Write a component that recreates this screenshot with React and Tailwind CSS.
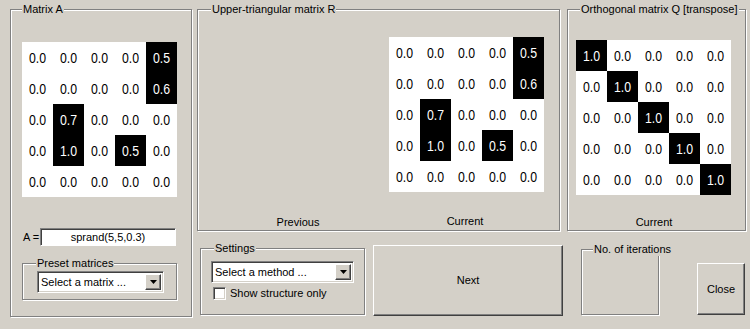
const A = [
  [0, 0, 0, 0, 0.5],
  [0, 0, 0, 0, 0.6],
  [0, 0.7, 0, 0, 0],
  [0, 1.0, 0, 0.5, 0],
  [0, 0, 0, 0, 0],
];

const Q = [0, 1, 2, 3, 4].map((r) => [0, 1, 2, 3, 4].map((c) => (r === c ? 1 : 0)));

function Matrix({ data }) {
  return (
    <div className="grid grid-cols-[repeat(5,31px)] grid-rows-[repeat(5,31px)] bg-white w-[155px] h-[155px] font-['Liberation_Sans',Arial,sans-serif] text-[15px]">
      {data.flat().map((v, i) => (
        <div
          key={i}
          className={`flex items-center justify-center leading-none ${v !== 0 ? 'bg-black text-white' : 'text-black'}`}
        >
          <span className="inline-block scale-x-[0.82]">{v.toFixed(1)}</span>
        </div>
      ))}
    </div>
  );
}

// etched group frame, legend sits over the top line
function Group({ title, className = '', legendLeft = 'left-[11px]', children }) {
  return (
    <div className={`relative border border-[#808080] shadow-[1px_1px_0_#fff,inset_1px_1px_0_#fff] ${className}`}>
      <span className={`absolute -top-[7px] ${legendLeft} px-[1px] bg-[#d4d0c8] leading-[13px] whitespace-nowrap`}>
        {title}
      </span>
      {children}
    </div>
  );
}

function Select({ label, className = '' }) {
  return (
    <div className={`flex items-center bg-white border border-t-[#808080] border-l-[#808080] border-b-white border-r-white shadow-[inset_1px_1px_0_#404040,inset_-1px_-1px_0_#d4d0c8] p-[2px] ${className}`}>
      <span className="flex-1 pl-[1px] leading-[13px] whitespace-nowrap">{label}</span>
      <div className="w-[16px] h-full bg-[#d4d0c8] border border-t-white border-l-white border-r-[#404040] border-b-[#404040] shadow-[inset_-1px_-1px_0_#808080] flex items-center justify-center">
        <svg width="7" height="4" viewBox="0 0 7 4">
          <path d="M0 0h7L3.5 4z" fill="#000" />
        </svg>
      </div>
    </div>
  );
}

function Button({ label, className = '' }) {
  return (
    <div className={`flex items-center justify-center bg-[#d4d0c8] border border-t-white border-l-white border-r-[#404040] border-b-[#404040] shadow-[inset_-1px_-1px_0_#808080] ${className}`}>
      {label}
    </div>
  );
}

export default function App() {
  return (
    <div className="w-[750px] h-[329px] overflow-hidden bg-[#d4d0c8] flex gap-[5px] pl-[10px] pt-[9px] font-['Liberation_Sans',Arial,sans-serif] text-[11px] text-black">
      {/* Matrix A */}
      <Group title="Matrix A" legendLeft="left-[11px]" className="w-[182px] h-[308px] flex flex-col pl-[11px] pt-[32px]">
        <Matrix data={A} />
        <div className="flex items-center mt-[31px] ml-[1px]">
          <span className="w-[17px] leading-[13px] whitespace-nowrap">A =</span>
          <div className="w-[136px] h-[18px] bg-white border border-t-[#808080] border-l-[#808080] border-b-white border-r-white shadow-[inset_1px_1px_0_#404040] flex items-center justify-center">
            sprand(5,5,0.3)
          </div>
        </div>
        <Group title="Preset matrices" legendLeft="left-[13px]" className="w-[155px] h-[37px] mt-[17px] pt-[7px] pl-[14px]">
          <Select label="Select a matrix ..." className="w-[127px] h-[22px]" />
        </Group>
      </Group>

      <div className="flex flex-col">
        <div className="flex gap-[7px]">
          {/* Upper-triangular matrix R */}
          <Group title="Upper-triangular matrix R" legendLeft="left-[13px]" className="w-[363px] h-[222px] flex flex-col">
            <div className="flex justify-end pr-[15px] pt-[27px]">
              <Matrix data={A} />
            </div>
            <div className="flex mt-[24px] leading-[13px]">
              <span className="w-[200px] text-center">Previous</span>
              <span className="w-[134px] text-center -mt-[1px]">Current</span>
            </div>
          </Group>

          {/* Orthogonal matrix Q */}
          <Group title="Orthogonal matrix Q [transpose]" legendLeft="left-[12px]" className="w-[179px] h-[222px] flex flex-col pl-[8px] pt-[30px]">
            <Matrix data={Q} />
            <span className="w-[155px] text-center mt-[21px] leading-[13px] pl-[1px]">Current</span>
          </Group>
        </div>

        <div className="flex items-start mt-[14px]">
          <Group title="Settings" legendLeft="left-[13px]" className="w-[165px] h-[67px] mt-[3px] ml-[3px] flex flex-col pl-[10px] pt-[12px]">
            <Select label="Select a method ..." className="w-[143px] h-[22px]" />
            <label className="flex items-center mt-[4px] ml-[2px] gap-[4px]">
              <span className="w-[13px] h-[13px] bg-white border border-t-[#808080] border-l-[#808080] border-b-white border-r-white shadow-[inset_1px_1px_0_#404040,inset_-1px_-1px_0_#d4d0c8]" />
              <span className="leading-[13px] whitespace-nowrap">Show structure only</span>
            </label>
          </Group>

          <Button label="Next" className="w-[190px] h-[71px] ml-[8px]" />

          <Group title="No. of iterations" legendLeft="left-[11px]" className="w-[78px] h-[66px] mt-[4px] ml-[18px]" />

          <Button label="Close" className="w-[48px] h-[52px] mt-[18px] ml-[38px]" />
        </div>
      </div>
    </div>
  );
}
